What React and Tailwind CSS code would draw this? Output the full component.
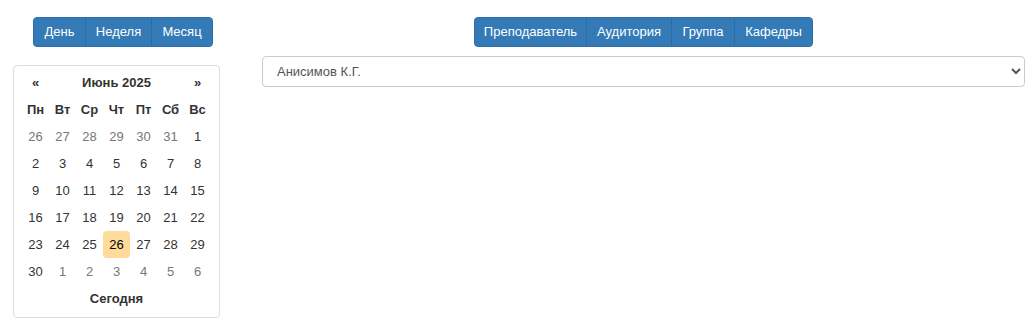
import { useState } from 'react'

const VIEWS = [
  { label: 'День', w: 'w-[53px]' },
  { label: 'Неделя', w: 'w-[67px]' },
  { label: 'Месяц', w: 'w-[62px]' },
]

const MODES = [
  { label: 'Преподаватель', w: 'w-[113px]' },
  { label: 'Аудитория', w: 'w-[86px]' },
  { label: 'Группа', w: 'w-[64px]' },
  { label: 'Кафедры', w: 'w-[79px]' },
]

const WEEKDAYS = ['Пн', 'Вт', 'Ср', 'Чт', 'Пт', 'Сб', 'Вс']

// 6 weeks shown: May 26 .. Jul 6
function buildDays() {
  const days = []
  for (let d = 26; d <= 31; d++) days.push({ n: d, other: true })
  for (let d = 1; d <= 30; d++) days.push({ n: d, other: false })
  for (let d = 1; d <= 6; d++) days.push({ n: d, other: true })
  return days
}

function BtnGroup({ items }) {
  return (
    <div className="flex">
      {items.map((it, i) => (
        <button
          key={it.label}
          className={`${it.w} h-[30px] bg-[#337ab7] text-white text-[13px] border border-[#2e6da4] ${
            i > 0 ? '-ml-px' : ''
          } ${i === 0 ? 'rounded-l-[4px]' : ''} ${i === items.length - 1 ? 'rounded-r-[4px]' : ''}`}
        >
          {it.label}
        </button>
      ))}
    </div>
  )
}

export default function App() {
  const [selected] = useState(26)
  const days = buildDays()

  return (
    <div className="flex pt-[17px] text-[#333] text-[13px]" style={{ fontFamily: '"Liberation Sans", Arial, sans-serif' }}>
      {/* left column */}
      <div className="w-[262px] pl-[13px]">
        <div className="pl-[20px]">
          <BtnGroup items={VIEWS} />
        </div>

        <div className="mt-[18px] w-[207px] border border-[#ddd] rounded-[4px] px-[8px] pt-[3px] pb-[5px]">
          <div className="grid grid-cols-7 font-bold">
            <div className="h-[27px] flex items-center justify-center">«</div>
            <div className="col-span-5 h-[27px] flex items-center justify-center">Июнь 2025</div>
            <div className="h-[27px] flex items-center justify-center">»</div>
            {WEEKDAYS.map((w) => (
              <div key={w} className="h-[27px] flex items-center justify-center">
                {w}
              </div>
            ))}
          </div>
          <div className="grid grid-cols-7">
            {days.map((d, i) => {
              const isToday = !d.other && d.n === selected
              return (
                <div
                  key={i}
                  className={`h-[27px] flex items-center justify-center rounded-[4px] ${
                    d.other ? 'text-[#777]' : 'text-[#333]'
                  } ${isToday ? 'bg-[#ffdb99] text-black' : ''}`}
                >
                  {d.n}
                </div>
              )
            })}
          </div>
          <div className="h-[27px] flex items-center justify-center font-bold">Сегодня</div>
        </div>
      </div>

      {/* right column */}
      <div className="w-[763px]">
        <div className="flex justify-center">
          <BtnGroup items={MODES} />
        </div>
        <select className="mt-[9px] w-full h-[31px] border border-[#ccc] rounded-[4px] bg-white text-[#555] text-[13px] px-[10px]">
          <option>Анисимов К.Г.</option>
        </select>
      </div>
    </div>
  )
}
